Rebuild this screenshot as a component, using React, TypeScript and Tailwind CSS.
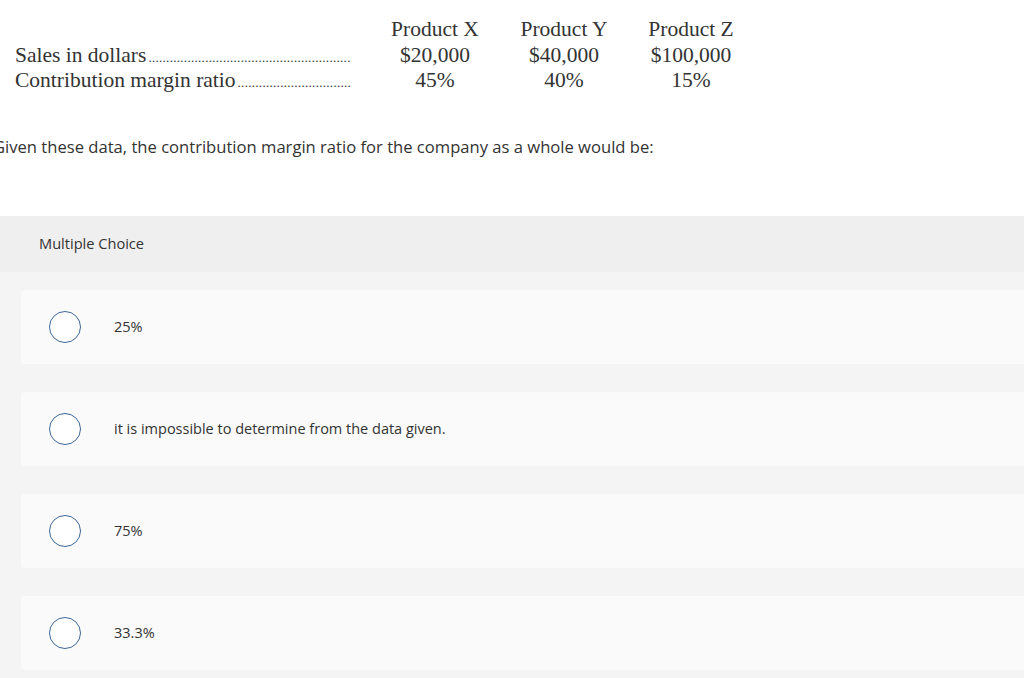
const rows = [
  { label: 'Sales in dollars', values: ['$20,000', '$40,000', '$100,000'] },
  { label: 'Contribution margin ratio', values: ['45%', '40%', '15%'] },
];

const products = ['Product X', 'Product Y', 'Product Z'];

const choices = ['25%', 'it is impossible to determine from the data given.', '75%', '33.3%'];

const dots = '.'.repeat(120);

export default function App() {
  return (
    <div className="w-[1024px] h-[678px] bg-white overflow-hidden text-[#333]">
      {/* data table */}
      <div
        className="h-[94px] pt-[17px] pl-[15px] text-[21.5px] leading-[25.5px] text-[#333]"
        style={{ fontFamily: '"Liberation Serif", "Times New Roman", serif' }}
      >
        <div className="grid grid-cols-[335px_20px_130px_128px_126px] auto-rows-[25.5px]">
          <div />
          <div />
          {products.map((p) => (
            <div key={p} className="text-center whitespace-nowrap">
              {p}
            </div>
          ))}
          {rows.map((r) => (
            <div key={r.label} className="contents">
              <div className="flex items-baseline overflow-hidden whitespace-nowrap">
                <span>{r.label}</span>
                <span className="flex-1 overflow-hidden text-[13px] leading-[14px] tracking-[0.3px] pl-[2px]">{dots}</span>
              </div>
              <div />
              {r.values.map((v, i) => (
                <div key={i} className="text-center whitespace-nowrap">
                  {v}
                </div>
              ))}
            </div>
          ))}
        </div>
      </div>

      {/* question */}
      <p
        className="mt-[41px] -ml-[7px] text-[16.6px] leading-[24px] whitespace-nowrap"
        style={{ fontFamily: '"Open Sans", Lato, sans-serif' }}
      >
        Given these data, the contribution margin ratio for the company as a whole would be:
      </p>

      <div className="mt-[57px]" style={{ fontFamily: '"Open Sans", Lato, sans-serif' }}>
        <div className="h-[56px] bg-[#efefef] flex items-center pl-[39px] text-[14.6px]">Multiple Choice</div>
        <div className="bg-[#f4f4f4] pt-[18px] pl-[21px] pb-[20px] flex flex-col gap-[28px]">
          {choices.map((c) => (
            <div key={c} className="h-[74px] -mr-[10px] rounded-[4px] bg-[#fafafa] flex items-center pl-[28px]">
              <span className="w-[32px] h-[32px] rounded-full border-[1.5px] border-[#3d6798] bg-white shrink-0" />
              <span className="ml-[33px] text-[14.5px]">{c}</span>
            </div>
          ))}
        </div>
      </div>
    </div>
  );
}
